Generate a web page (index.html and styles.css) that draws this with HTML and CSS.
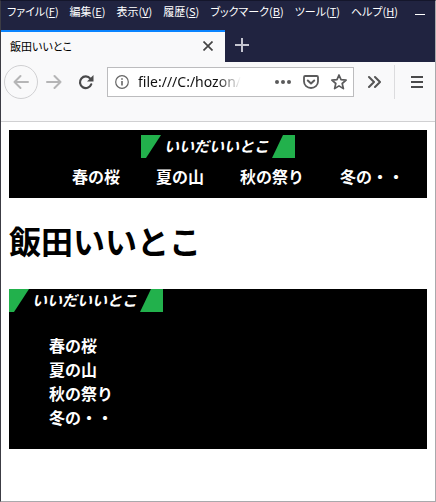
FILE: index.html
```html
<!DOCTYPE html>
<html lang="ja">
<head>
  <meta charset="UTF-8">
  <meta name="viewport" content="width=device-width, initial-scale=1.0">
  <title>飯田いいとこ</title>
  <link rel="stylesheet" href="styles.css">
</head>
<body>
<div class="window">

  <!-- Menu bar -->
  <div class="menubar">
    <button class="menu">ファイル(<u>F</u>)</button>
    <button class="menu">編集(<u>E</u>)</button>
    <button class="menu">表示(<u>V</u>)</button>
    <button class="menu">履歴(<u>S</u>)</button>
    <button class="menu">ブックマーク(<u>B</u>)</button>
    <button class="menu">ツール(<u>T</u>)</button>
    <button class="menu">ヘルプ(<u>H</u>)</button>
    <button class="minimize" aria-label="最小化">
      <svg width="10" height="10" viewBox="0 0 10 10"><path d="M0 8.500h10" stroke="#fff"/></svg>
    </button>
  </div>

  <!-- Tabs -->
  <div class="tabs">
    <div class="tab">
      <span class="tab-title">飯田いいとこ</span>
      <button aria-label="タブを閉じる">
        <svg width="10" height="10" viewBox="0 0 10 10"><path d="M.5.5l9 9M9.500.5l-9 9" stroke="#444" stroke-width="1.700"/></svg>
      </button>
    </div>
    <button class="new-tab" aria-label="新しいタブ">
      <svg width="14" height="14" viewBox="0 0 14 14"><path d="M7 0v14M0 7h14" stroke="#c4c5d0" stroke-width="2"/></svg>
    </button>
  </div>

  <!-- Toolbar -->
  <div class="toolbar">
    <button class="back" aria-label="戻る">
      <svg width="16" height="16" viewBox="0 0 16 16" fill="none" stroke="#b5b5b6" stroke-width="2" stroke-linecap="round" stroke-linejoin="round"><path d="M15 8H1.500M7.500 2l-6 6 6 6"/></svg>
    </button>
    <button class="forward" aria-label="進む">
      <svg width="16" height="16" viewBox="0 0 16 16" fill="none" stroke="#b5b5b6" stroke-width="2" stroke-linecap="round" stroke-linejoin="round"><path d="M1 8h13.500M8.500 2l6 6-6 6"/></svg>
    </button>
    <button class="reload" aria-label="再読み込み">
      <svg width="16" height="16" viewBox="0 0 16 16"><path d="M12.300 4.600A5.800 5.800 0 1 0 13.200 10.300" fill="none" stroke="#4a4a4b" stroke-width="2.200" stroke-linecap="round"/><path d="M15.500 1v6.500H9z" fill="#4a4a4b"/></svg>
    </button>
    <div class="urlbar">
      <svg width="14" height="14" viewBox="0 0 14 14"><circle cx="7" cy="7" r="6.300" fill="none" stroke="#666" stroke-width="1.200"/><path d="M7 6v4.500M7 3.200v1.600" stroke="#666" stroke-width="1.600"/></svg>
      <input class="url" type="text" value="file:///C:/hozon/iida/index.html" aria-label="アドレス">
      <button aria-label="ページ操作">
        <svg width="16" height="16" viewBox="0 0 16 16" fill="#5a5a5b"><circle cx="2" cy="8" r="2"/><circle cx="8" cy="8" r="2"/><circle cx="14" cy="8" r="2"/></svg>
      </button>
      <button aria-label="Pocket に保存">
        <svg width="16" height="16" viewBox="0 0 16 16" fill="none" stroke="#5a5a5b" stroke-width="1.800" stroke-linecap="round" stroke-linejoin="round"><path d="M2.200 2h11.600q1.200 0 1.200 1.200V7.500a7 6.500 0 0 1-14 0V3.200Q1 2 2.200 2z"/><path d="M4.800 6.500L8 9.500l3.200-3" stroke-width="2"/></svg>
      </button>
      <button aria-label="ブックマークに追加">
        <svg width="16" height="16" viewBox="0 0 16 16" fill="none" stroke="#5a5a5b" stroke-width="1.700" stroke-linejoin="round"><path d="M8 1l2 4.700 5.100.4-3.900 3.400 1.200 5.100L8 11.900l-4.400 2.700 1.200-5.100L.9 6.100 6 5.700z"/></svg>
      </button>
    </div>
    <button class="more" aria-label="その他のツール">
      <svg width="14" height="14" viewBox="0 0 14 14" fill="none" stroke="#555" stroke-width="2" stroke-linecap="round" stroke-linejoin="round"><path d="M2 2l5 5-5 5M8 2l5 5-5 5"/></svg>
    </button>
    <button class="app-menu" aria-label="メニュー">
      <svg width="12" height="12" viewBox="0 0 12 12"><path d="M0 1h12M0 6h12M0 11h12" stroke="#4a4a4b" stroke-width="2"/></svg>
    </button>
  </div>

  <!-- Page -->
  <main class="page">
    <header class="header">
      <div class="logo">
        <svg width="20" height="23" viewBox="0 0 20 23"><path d="M0 0h20L5 23H0z" fill="#22b14c"/></svg>
        <span>いいだいいとこ</span>
        <svg width="23" height="23" viewBox="0 0 23 23"><path d="M11 0h12v23H0z" fill="#22b14c"/></svg>
      </div>
      <ul class="nav">
        <li>春の桜</li>
        <li>夏の山</li>
        <li>秋の祭り</li>
        <li>冬の・・</li>
      </ul>
    </header>

    <h1>飯田いいとこ</h1>

    <footer class="footer">
      <div class="logo">
        <svg width="20" height="23" viewBox="0 0 20 23"><path d="M0 0h20L5 23H0z" fill="#22b14c"/></svg>
        <span>いいだいいとこ</span>
        <svg width="23" height="23" viewBox="0 0 23 23"><path d="M11 0h12v23H0z" fill="#22b14c"/></svg>
      </div>
      <ul class="list">
        <li>春の桜</li>
        <li>夏の山</li>
        <li>秋の祭り</li>
        <li>冬の・・</li>
      </ul>
    </footer>
  </main>
</div>
</body>
</html>
```
FILE: styles.css
```css
* {
  box-sizing: border-box;
}

body {
  margin: 0;
  font-family: "Noto Sans CJK JP", sans-serif;
  background-color: #fff;
  color: #000;
}

button {
  display: flex;
  align-items: center;
  justify-content: center;
  flex: none;
  padding: 0;
  border: none;
  background: none;
  font: inherit;
  color: inherit;
}

svg {
  display: block;
  flex: none;
}

ul {
  margin: 0;
  list-style: none;
}

.window {
  min-height: 100vh;
  border: 1px solid #a9a9ac;
  border-left-color: #3c3c44;
  border-top-color: #14162b;
}

/* menu bar */
.menubar {
  display: flex;
  align-items: center;
  gap: 11px;
  height: 19px;
  padding: 0 10px 0 6px;
  background-color: #202340;
  color: #fff;
  font-size: 11px;
  line-height: 18px;
  font-feature-settings: "palt";
}

.menu {
  white-space: nowrap;
}

.minimize {
  margin-left: auto;
}

/* tabs */
.tabs {
  display: flex;
  height: 42px;
  padding-top: 10px;
  background-color: #202340;
}

.tab {
  display: flex;
  align-items: center;
  justify-content: space-between;
  width: 224px;
  padding: 0 12px 2px 9px;
  border-top: 2px solid #0a84ff;
  background-color: #f9f9fa;
}

.tab-title {
  font-size: 11px;
  line-height: 16px;
  font-feature-settings: "palt";
}

.new-tab {
  width: 34px;
  padding-bottom: 2px;
}

/* toolbar */
.toolbar {
  display: flex;
  align-items: flex-start;
  height: 60px;
  padding: 3px 0 0 3px;
  border-bottom: 1px solid #d0d0d2;
  background-color: #f9f9fa;
}

.back {
  width: 34px;
  height: 34px;
  border: 1px solid #d0d0d2;
  border-radius: 50%;
}

.forward,
.reload {
  width: 32px;
  height: 34px;
}

.urlbar {
  display: flex;
  flex: 1;
  align-items: center;
  gap: 12px;
  min-width: 0;
  height: 30px;
  margin: 2px 0 0 5px;
  padding: 0 6px 0 7px;
  border: 1px solid #bcbcbe;
  background-color: #fff;
}

.url {
  flex: 1;
  min-width: 0;
  margin: 0 22px 0 -3px;
  padding: 0;
  border: none;
  outline: none;
  background: none;
  font-family: "Noto Sans", sans-serif;
  font-size: 14px;
  line-height: 20px;
  color: #111;
  -webkit-mask-image: linear-gradient(to left, transparent, #000 24px);
  mask-image: linear-gradient(to left, transparent, #000 24px);
}

.more {
  width: 40px;
  height: 34px;
}

.app-menu {
  width: 41px;
  height: 34px;
  padding-left: 3px;
  border-left: 1px solid #dcdcde;
}

/* page */
.page {
  padding: 8px;
}

.logo {
  display: flex;
  justify-content: space-between;
  width: 154px;
  color: #fff;
  font-size: 15px;
  font-weight: bold;
  font-style: italic;
  line-height: 22px;
  white-space: nowrap;
}

.header {
  display: flex;
  flex-direction: column;
  align-items: center;
  padding: 5px 0 10px;
  background-color: #000;
}

.nav {
  display: flex;
  justify-content: center;
  gap: 36px;
  width: 100%;
  margin-top: 6px;
  padding-left: 40px;
}

.nav,
.list {
  color: #fff;
  font-size: 16px;
  font-weight: bold;
  line-height: 24px;
  white-space: nowrap;
}

h1 {
  margin: 18px 0 25px;
  font-size: 32px;
  line-height: 48px;
}

.footer {
  padding-bottom: 20px;
  background-color: #000;
}

.list {
  margin-top: 21px;
  padding-left: 40px;
}
```
